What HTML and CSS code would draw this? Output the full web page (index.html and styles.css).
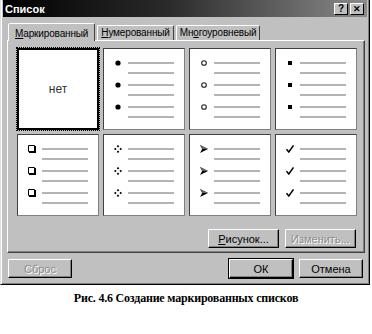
FILE: index.html
```html
<!DOCTYPE html>
<html lang="ru">
<head>
  <meta charset="UTF-8">
  <title>Список</title>
  <link rel="stylesheet" href="styles.css">
</head>
<body>

  <!-- Dialog window -->
  <div class="dialog">
    <div class="titlebar">
      <span class="title">Список</span>
      <span class="tbtn">?</span>
      <span class="tbtn close">✕</span>
    </div>

    <!-- Tabs -->
    <div class="tabs">
      <div class="tab active"><u>М</u>аркированный</div>
      <div class="tab"><u>Н</u>умерованный</div>
      <div class="tab">Мн<u>о</u>гоуровневый</div>
    </div>

    <div class="panel">
      <div class="grid">
        <div class="cell selected"><span class="none">нет</span></div>

        <div class="cell">
          <div class="item"><svg class="mark" viewBox="0 0 8 8"><circle cx="4" cy="4" r="2.6"/></svg><div class="lines"><i></i><i></i></div></div>
          <div class="item"><svg class="mark" viewBox="0 0 8 8"><circle cx="4" cy="4" r="2.6"/></svg><div class="lines"><i></i><i></i></div></div>
          <div class="item"><svg class="mark" viewBox="0 0 8 8"><circle cx="4" cy="4" r="2.6"/></svg><div class="lines"><i></i><i></i></div></div>
        </div>

        <div class="cell">
          <div class="item"><svg class="mark" viewBox="0 0 8 8"><circle cx="4" cy="4" r="2.3" fill="none" stroke="#222" stroke-width="1.1"/></svg><div class="lines"><i></i><i></i></div></div>
          <div class="item"><svg class="mark" viewBox="0 0 8 8"><circle cx="4" cy="4" r="2.3" fill="none" stroke="#222" stroke-width="1.1"/></svg><div class="lines"><i></i><i></i></div></div>
          <div class="item"><svg class="mark" viewBox="0 0 8 8"><circle cx="4" cy="4" r="2.3" fill="none" stroke="#222" stroke-width="1.1"/></svg><div class="lines"><i></i><i></i></div></div>
        </div>

        <div class="cell">
          <div class="item"><svg class="mark" viewBox="0 0 8 8"><rect x="2" y="2" width="4" height="4"/></svg><div class="lines"><i></i><i></i></div></div>
          <div class="item"><svg class="mark" viewBox="0 0 8 8"><rect x="2" y="2" width="4" height="4"/></svg><div class="lines"><i></i><i></i></div></div>
          <div class="item"><svg class="mark" viewBox="0 0 8 8"><rect x="2" y="2" width="4" height="4"/></svg><div class="lines"><i></i><i></i></div></div>
        </div>

        <div class="cell">
          <div class="item"><svg class="mark" viewBox="0 0 8 8"><path d="M0.5 0.5H6.5V6.5H0.5Z" fill="#fff" stroke="#000"/><path d="M7 1V7H1" fill="none" stroke="#000" stroke-width="2"/></svg><div class="lines"><i></i><i></i></div></div>
          <div class="item"><svg class="mark" viewBox="0 0 8 8"><path d="M0.5 0.5H6.5V6.5H0.5Z" fill="#fff" stroke="#000"/><path d="M7 1V7H1" fill="none" stroke="#000" stroke-width="2"/></svg><div class="lines"><i></i><i></i></div></div>
          <div class="item"><svg class="mark" viewBox="0 0 8 8"><path d="M0.5 0.5H6.5V6.5H0.5Z" fill="#fff" stroke="#000"/><path d="M7 1V7H1" fill="none" stroke="#000" stroke-width="2"/></svg><div class="lines"><i></i><i></i></div></div>
        </div>

        <div class="cell">
          <div class="item"><svg class="mark" viewBox="0 0 8 8"><path d="M4 0L5.3 1.3L4 2.6L2.7 1.3ZM4 5.4L5.3 6.7L4 8L2.7 6.7ZM0 4L1.3 2.7L2.6 4L1.3 5.3ZM5.4 4L6.7 2.7L8 4L6.7 5.3Z"/></svg><div class="lines"><i></i><i></i></div></div>
          <div class="item"><svg class="mark" viewBox="0 0 8 8"><path d="M4 0L5.3 1.3L4 2.6L2.7 1.3ZM4 5.4L5.3 6.7L4 8L2.7 6.7ZM0 4L1.3 2.7L2.6 4L1.3 5.3ZM5.4 4L6.7 2.7L8 4L6.7 5.3Z"/></svg><div class="lines"><i></i><i></i></div></div>
          <div class="item"><svg class="mark" viewBox="0 0 8 8"><path d="M4 0L5.3 1.3L4 2.6L2.7 1.3ZM4 5.4L5.3 6.7L4 8L2.7 6.7ZM0 4L1.3 2.7L2.6 4L1.3 5.3ZM5.4 4L6.7 2.7L8 4L6.7 5.3Z"/></svg><div class="lines"><i></i><i></i></div></div>
        </div>

        <div class="cell">
          <div class="item"><svg class="mark" viewBox="0 0 8 8"><path d="M0 0L8 4L0 8L2.2 4Z"/><path d="M0 0L8 4L2.2 4Z" fill="#666"/></svg><div class="lines"><i></i><i></i></div></div>
          <div class="item"><svg class="mark" viewBox="0 0 8 8"><path d="M0 0L8 4L0 8L2.2 4Z"/><path d="M0 0L8 4L2.2 4Z" fill="#666"/></svg><div class="lines"><i></i><i></i></div></div>
          <div class="item"><svg class="mark" viewBox="0 0 8 8"><path d="M0 0L8 4L0 8L2.2 4Z"/><path d="M0 0L8 4L2.2 4Z" fill="#666"/></svg><div class="lines"><i></i><i></i></div></div>
        </div>

        <div class="cell">
          <div class="item"><svg class="mark" viewBox="0 0 8 8"><path d="M0.5 4.2L2.8 7L7.5 0.5" fill="none" stroke="#000" stroke-width="1.5"/></svg><div class="lines"><i></i><i></i></div></div>
          <div class="item"><svg class="mark" viewBox="0 0 8 8"><path d="M0.5 4.2L2.8 7L7.5 0.5" fill="none" stroke="#000" stroke-width="1.5"/></svg><div class="lines"><i></i><i></i></div></div>
          <div class="item"><svg class="mark" viewBox="0 0 8 8"><path d="M0.5 4.2L2.8 7L7.5 0.5" fill="none" stroke="#000" stroke-width="1.5"/></svg><div class="lines"><i></i><i></i></div></div>
        </div>
      </div>

      <div class="panel-actions">
        <button class="btn"><u>Р</u>исунок...</button>
        <button class="btn" disabled>Изменить...</button>
      </div>
    </div>

    <div class="footer">
      <button class="btn" disabled>Сброс</button>
      <div class="footer-right">
        <button class="btn default">ОК</button>
        <button class="btn">Отмена</button>
      </div>
    </div>
  </div>

  <p class="caption">Рис. 4.6 Создание маркированных списков</p>

</body>
</html>
```

FILE: styles.css
```css
/* Page */
body {
  margin: 0;
  background: #fff;
  font-family: "Liberation Sans", Arial, sans-serif;
  font-size: 11px;
}

/* Dialog frame */
.dialog {
  width: 370px;
  height: 285px;
  box-sizing: border-box;
  background: #c0c0c0;
  border-right: 1px solid #000;
  border-bottom: 1px solid #000;
  border-left: 1px solid #dfdfdf;
  box-shadow: inset 1px 0 #fff, inset -1px -1px #808080;
  padding: 0 2px 0 2px;
}

/* Title bar */
.titlebar {
  height: 17px;
  display: flex;
  align-items: center;
  padding: 0 3px 0 2px;
  background: linear-gradient(to right, #000 0%, #2a2a2a 45%, #8a8a8a 100%);
}
.title {
  flex: 1;
  color: #fff;
  font-weight: bold;
  font-size: 11px;
}
.tbtn {
  width: 14px;
  height: 12px;
  box-sizing: border-box;
  background: #c0c0c0;
  border: 1px solid;
  border-color: #fff #000 #000 #fff;
  font-size: 10px;
  font-weight: bold;
  line-height: 10px;
  text-align: center;
  color: #000;
}
.tbtn.close { margin-left: 2px; font-size: 9px; }

/* Tabs */
.tabs {
  display: flex;
  align-items: flex-end;
  height: 18px;
  margin-top: 5px;
  padding-left: 5px;
  font-size: 10px;
  letter-spacing: -0.15px;
}
.tab {
  height: 14px;
  padding: 0 3px;
  margin-right: 2px;
  line-height: 14px;
  border: 1px solid;
  border-bottom: none;
  border-color: #fff #404040 transparent #fff;
  border-radius: 2px 2px 0 0;
  color: #000;
}
.tab.active {
  position: relative;
  height: 17px;
  line-height: 19px;
  padding: 0 6px;
  margin-bottom: -1px;
  background: #c0c0c0;
  z-index: 1;
}
.tab u, .btn u { text-decoration: underline; }

/* Tab panel */
.panel {
  height: 213px;
  box-sizing: border-box;
  margin: 0 0 0 4px;
  width: 358px;
  border: 1px solid;
  border-color: #fff #404040 #404040 #fff;
  box-shadow: inset -1px -1px #808080;
  padding: 7px 0 0 9px;
}

/* Bullet style grid */
.grid {
  display: grid;
  grid-template-columns: repeat(4, 82px);
  grid-template-rows: repeat(2, 82px);
  gap: 4px;
}
.cell {
  box-sizing: border-box;
  background: #fff;
  border: 1px solid;
  border-color: #404040 #808080 #808080 #404040;
  padding: 13px 0 0 8px;
}
.cell.selected {
  border: 2px solid #000;
  outline: 1px dotted #000;
  display: flex;
  align-items: center;
  justify-content: center;
  padding: 0;
}
.none {
  font-family: "Liberation Sans", Arial, sans-serif;
  font-size: 12px;
  color: #333;
}
.item {
  display: flex;
  align-items: flex-start;
  height: 22px;
}
.mark {
  width: 8px;
  height: 8px;
  margin: -3px 6px 0 2px;
  flex: none;
}
.lines {
  display: flex;
  flex-direction: column;
  gap: 8px;
}
.lines i {
  display: block;
  width: 46px;
  height: 2px;
  background: #b4b4b4;
}

/* Buttons */
.btn {
  height: 19px;
  padding: 0;
  box-sizing: border-box;
  background: #c0c0c0;
  border: 1px solid;
  border-color: #fff #000 #000 #fff;
  box-shadow: inset -1px -1px #808080;
  font-family: "Liberation Sans", Arial, sans-serif;
  font-size: 11px;
  color: #000;
}
.btn:disabled {
  color: #8c8c8c;
  text-shadow: 1px 1px #fff;
}
.btn.default {
  outline: 1px solid #000;
  outline-offset: 0;
}

.panel-actions {
  display: flex;
  justify-content: flex-end;
  gap: 6px;
  margin-top: 13px;
  padding-right: 8px;
}
.panel-actions .btn { width: 71px; }

.footer {
  display: flex;
  justify-content: space-between;
  margin-top: 6px;
  padding: 0 4px 0 5px;
}
.footer .btn { width: 64px; }
.footer-right { display: flex; gap: 6px; }

/* Figure caption */
.caption {
  margin: 6px 0 0 0;
  text-align: center;
  font-family: "Liberation Serif", "Times New Roman", serif;
  font-weight: bold;
  font-size: 12px;
  letter-spacing: -0.2px;
}
```
